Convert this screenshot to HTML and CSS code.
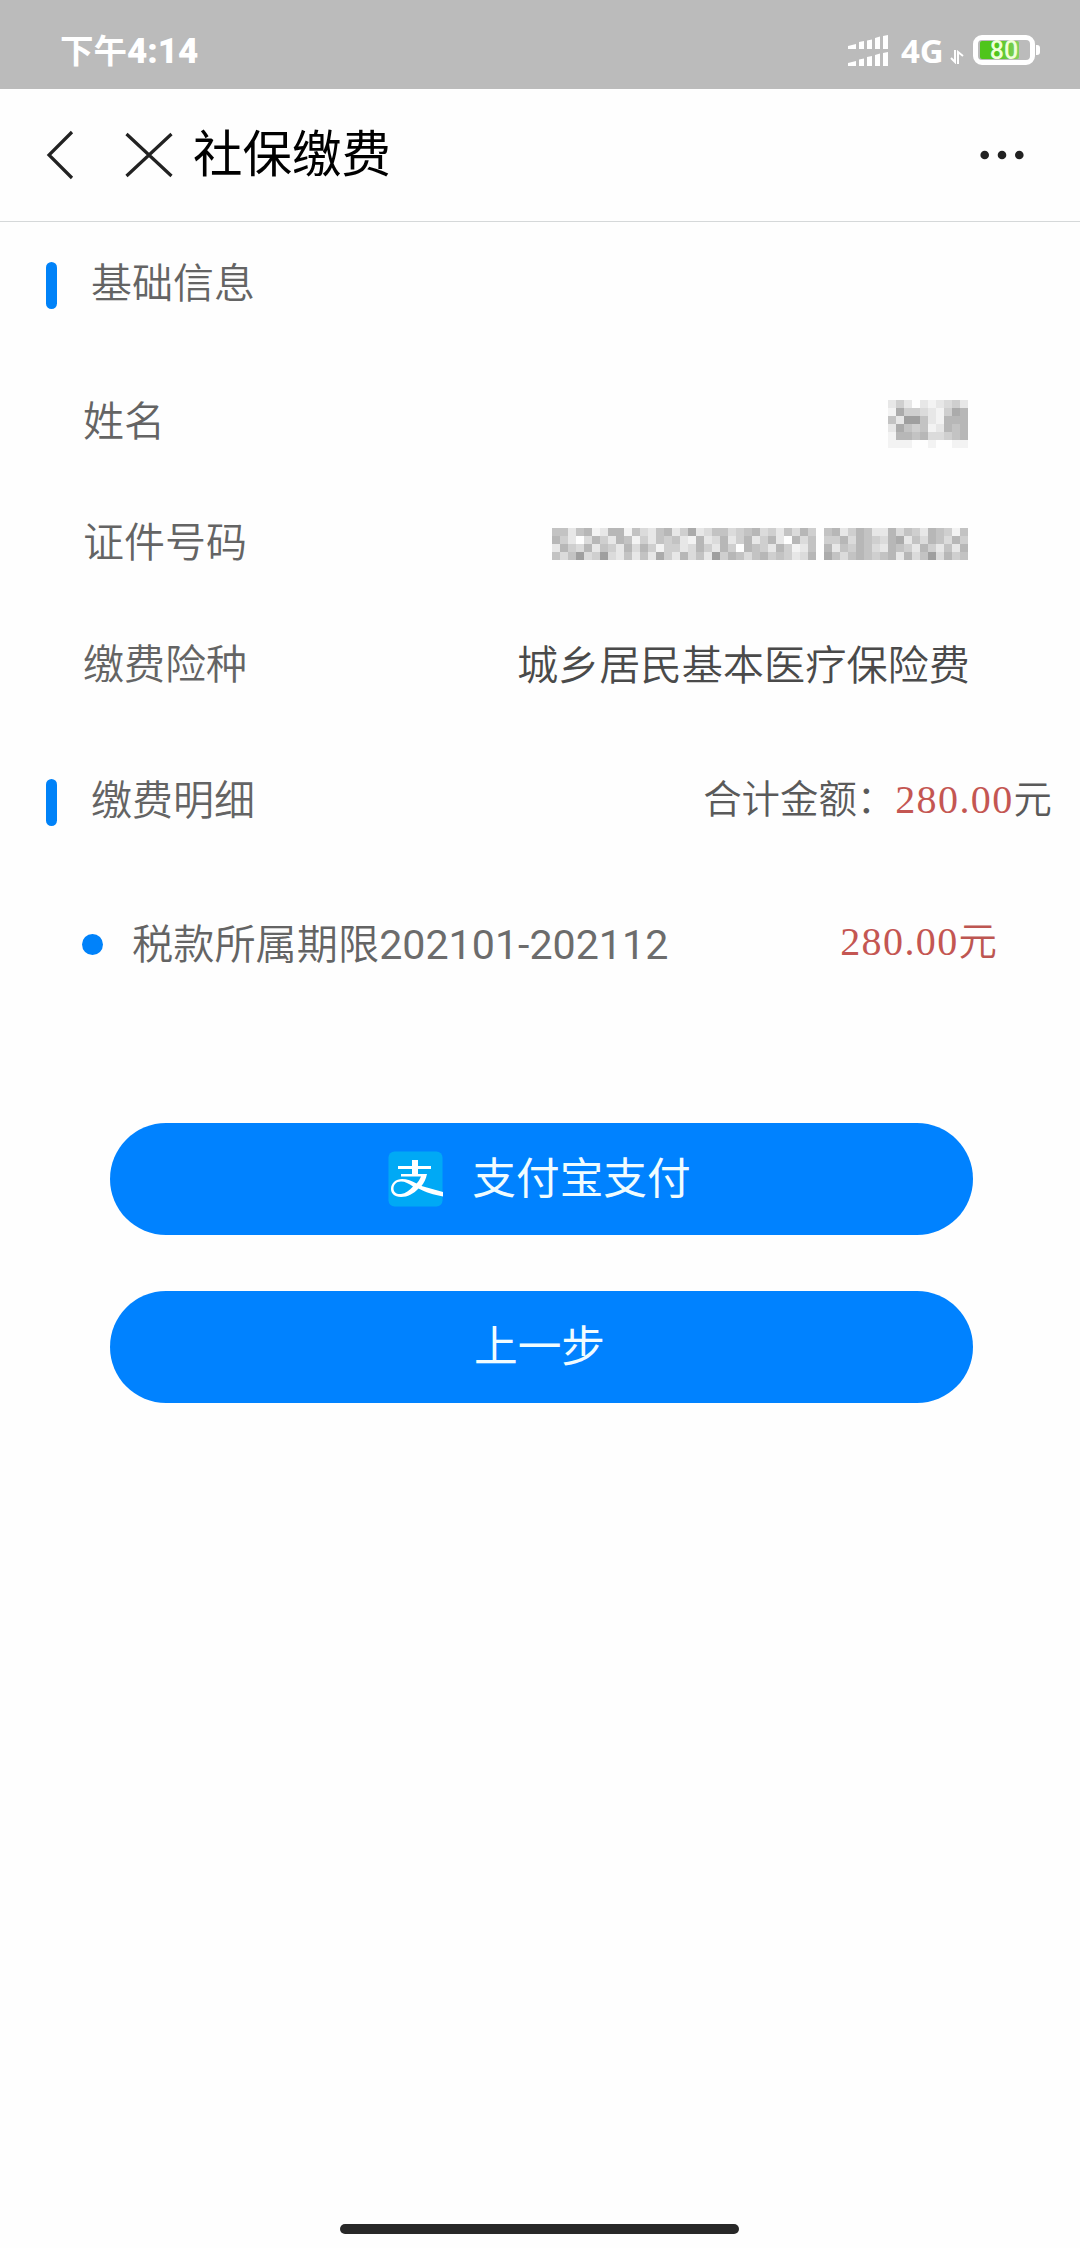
FILE: index.html
```html
<!DOCTYPE html>
<html lang="zh-CN">
<head>
<meta charset="utf-8">
<title>社保缴费</title>
<link rel="stylesheet" href="styles.css">
</head>
<body>
<div class="screen">
  <header class="status">
    <span class="clock">下午<b>4:14</b></span>
    <div class="indicators">
      <svg class="signal" width="40" height="32" viewBox="0 0 40 32" fill="#fff">
        <path d="M0 11L8 9V14H0zM11 7L16 6V14H11zM19 5.500L24 4.500V14H19zM27 3L32 1.500V14H27zM35 1L40 0V14H35z"/>
        <path d="M0 28L8 26V31H0zM11 24.500L16 23.500V31H11zM19 22L24 21V31H19zM27 20L32 18.500V31H27zM35 18L40 17V31H35z"/>
      </svg>
      <span class="network">4G</span>
      <svg class="transfer" width="14" height="14" viewBox="0 0 14 14" fill="none" stroke="#fff" stroke-width="2">
        <path d="M5 0V12L1 8M8 14V2L13 6"/>
      </svg>
      <div class="battery"><div class="charge"></div><span class="level">80</span></div>
      <i class="nub"></i>
    </div>
  </header>

  <nav class="titlebar">
    <svg class="back" width="30" height="50" viewBox="0 0 30 50" fill="none" stroke="#222" stroke-width="3.200"><path d="M27 2L4 25L27 48"/></svg>
    <svg class="close" width="48" height="46" viewBox="0 0 48 46" fill="none" stroke="#222" stroke-width="3.200"><path d="M1.500 2L46.500 44M46.500 2L1.500 44"/></svg>
    <h1>社保缴费</h1>
    <svg class="more" width="44" height="10" viewBox="0 0 44 10" fill="#222"><circle cx="4.700" cy="5" r="4.300"/><circle cx="22" cy="5" r="4.300"/><circle cx="39.300" cy="5" r="4.300"/></svg>
  </nav>

  <main>
    <section class="basic">
      <div class="heading"><i class="bar"></i><h2>基础信息</h2></div>
      <div class="field"><span>姓名</span><svg class="mosaic name" data-mask="name" width="88" height="48"></svg></div>
      <div class="field"><span>证件号码</span><svg class="mosaic number" data-mask="id" width="424" height="32"></svg></div>
      <div class="field"><span>缴费险种</span><span class="value">城乡居民基本医疗保险费</span></div>
    </section>

    <section class="detail">
      <div class="heading"><i class="bar"></i><h2>缴费明细</h2>
        <p class="total">合计金额：<span class="money">280.00</span>元</p>
      </div>
      <div class="item"><i class="dot"></i><span class="period">税款所属期限<span class="months">202101-202112</span></span><span class="amount"><span class="money">280.00</span>元</span></div>
    </section>

    <div class="actions">
      <button class="btn pay">
        <svg class="alipay" width="56" height="56" viewBox="0 0 56 56">
          <rect x="0.500" y="0.500" width="54" height="55" rx="6" fill="#00a9f5"/>
          <path d="M24 9H30V15H43V18H30V23H39C38 28 36 32 33.500 35L55 41V45.500C46 44 37 41 30.500 37.500C25 43 20 46 13 46C6 46 3 42 3 38C3 32 8 28 14 28C19 28 24 30 28.500 32.500C30.500 30.500 32 28 33 25.500H13V23H24V18H10V15H24zM25 35.500C21 32.500 17 30.500 13 30.500C8 30.500 5.500 34 5.500 37.500C5.500 41 8.500 43.500 13 43C17.500 42.500 21.500 39.500 25 35.500z" fill="#fff" fill-rule="evenodd"/>
        </svg>
        <span>支付宝支付</span>
      </button>
      <button class="btn">上一步</button>
    </div>
  </main>
  <div class="home"></div>
</div>
<script src="mosaic.js"></script>
</body>
</html>
```
FILE: styles.css
```css
* { box-sizing: border-box; }
body {
  margin: 0;
  background: #fefefe;
  font-family: Roboto, "Noto Sans CJK SC", sans-serif;
  color: #646464;
}
h1, h2, p { margin: 0; font-weight: inherit; }
svg { display: block; flex: none; }
.screen { width: 1080px; height: 2248px; display: flex; flex-direction: column; }

.status {
  height: 89px;
  background: #bbb;
  color: #fff;
  display: flex;
  justify-content: space-between;
  padding: 35px 40px 0 60px;
}
.clock { font-size: 33.500px; line-height: 33px; font-weight: 700; }
.clock b { font-size: 35px; }
.indicators { display: flex; align-items: flex-start; }
.network { margin-left: 13px; width: 47px; font: 700 33px/31px "Open Sans", sans-serif; }
.transfer { margin: 15px 0 0 2px; }
.transfer + .battery { margin-left: 9px; }
.battery {
  position: relative;
  width: 62px;
  height: 30px;
  border: 5px solid #fff;
  border-radius: 9px;
  padding: 1px 2px;
}
.charge { width: 39px; height: 18px; border-radius: 2px; background: linear-gradient(90deg, #4fc51c 40%, #83d05e); }
.level {
  position: absolute;
  inset: 0;
  text-align: center;
  color: #efffd8;
  font: 500 25px/21px Roboto, sans-serif;
}
.nub { width: 4px; height: 10px; margin: 10px 0 0 1px; background: #fff; border-radius: 0 3px 3px 0; }

.titlebar {
  height: 133px;
  display: flex;
  align-items: center;
  border-bottom: 1px solid #d5d8d9;
  padding: 0 56px 0 45px;
  color: #000;
}
.close { margin-left: 50px; }
.titlebar h1 { margin-left: 20px; font-size: 49.500px; line-height: 60px; font-weight: 400; }
.more { margin-left: auto; }

main { flex: 1; font-weight: 350; }
.heading { height: 122px; display: flex; align-items: center; padding: 0 28px 0 46px; }
.bar { width: 11px; height: 47px; border-radius: 6px; background: #0082f8; }
.heading h2 { margin: 0 0 4px 34px; font-size: 41px; line-height: 60px; }
.basic { padding-top: 3px; }
.basic .heading { height: 121px; }
.basic .heading + .field { margin-top: 11px; }
.field {
  height: 121.500px;
  display: flex;
  align-items: center;
  justify-content: space-between;
  padding: 0 110px 0 83px;
  font-size: 41px;
}
.value { color: #4a4a4a; font-size: 41.200px; margin-top: 3px; }
.mosaic { margin-right: -6px; }
.mosaic.name { margin-top: 12px; }
.mosaic.number { margin-top: 9px; }
.detail { padding-top: 21px; }
.detail .heading { height: 120px; }
.total { margin: 0 0 14px auto; font-size: 38.400px; color: #5a5a5a; }
.money { font: 400 40px "Liberation Serif", serif; letter-spacing: 1.400px; color: #c45652; }
.item { height: 164px; display: flex; align-items: center; padding: 0 83px 0 82px; font-size: 41.200px; }
.dot { width: 21px; height: 21px; border-radius: 50%; background: #0082fa; }
.period { margin: 0 0 8px 29px; }
.months { font-weight: 400; color: #6c6c6c; }
.amount { margin: 0 0 13px auto; font-size: 38.400px; color: #bd5651; }

.actions { padding: 96px 107px 0 110px; display: flex; flex-direction: column; gap: 56px; }
.btn {
  height: 112px;
  border: 0;
  border-radius: 56px;
  background: #0082ff;
  color: #f0fcff;
  font: 400 43.700px/60px Roboto, "Noto Sans CJK SC", sans-serif;
  display: flex;
  align-items: center;
  justify-content: center;
  padding: 1px 4px 0 0;
}
.alipay { margin-right: 28px; }
.home { width: 399px; height: 10px; border-radius: 5px; background: #282828; margin: 0 0 14px 340px; }
```
FILE: mosaic.js
```js
// Grey cells that cover private values; each digit is a shade, 0 = white, 9 = darkest.
const masks = {
  name: [
    "24202123420",
    "17443214760",
    "52885216660",
    "27545126560",
    "16656334560",
    "11100100110"
  ],
  id: [
    "5525612661532562472355345634253640562465226354265415",
    "6420364265142545216236246246206350446365436725365364",
    "2643625426364144236426406542641250625465326542642526",
    "5358348325252742635284653564542360753565456263583645"
  ]
};
const cell = 8;
document.querySelectorAll(".mosaic").forEach(svg => {
  masks[svg.dataset.mask].forEach((row, y) => {
    [...row].forEach((shade, x) => {
      if (shade === "0") return;
      const rect = document.createElementNS("http://www.w3.org/2000/svg", "rect");
      const grey = 255 - shade * 12;
      rect.setAttribute("x", x * cell);
      rect.setAttribute("y", y * cell);
      rect.setAttribute("width", cell);
      rect.setAttribute("height", cell);
      rect.setAttribute("fill", `rgb(${grey},${grey},${grey})`);
      svg.append(rect);
    });
  });
});
```
